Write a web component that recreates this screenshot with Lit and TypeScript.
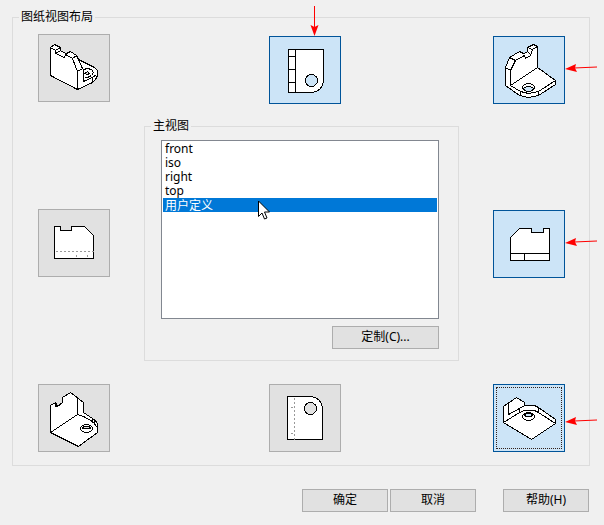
import { LitElement, html, css, svg, nothing } from "lit";
import type { TemplateResult } from "lit";
import { customElement, property } from "lit/decorators.js";

interface ViewInfo {
  label: string;
  drawing: TemplateResult;
}

const views: Record<string, ViewInfo> = {
  isoTopLeft: {
    label: "左上轴测图",
    drawing: svg`
      <path class="face" d="M11 12L15 9L21 12V15L26 18L31 16L37 20L39 24L55 32L58 35V40L56 44L53 47L38 54L11 40Z"/>
      <path d="M11 12L16 15V18L25 22L26 19L33 23L38 36V54M16 15L21 12M16 18L21 15M26 19L31 16M33 23L37 20L43 33L38 36"/>
      <path d="M44 34V46L53 42L57 39M53 42V47M44 34L48 33L52 34L54 37L52 40L48 42H45"/>
      <path class="hole" d="M45 38L48 36L50 38L48 39Z"/>`,
  },
  top: {
    label: "俯视图",
    drawing: svg`
      <path class="face" d="M18 12H53V43Q52 54 41 55H18Z"/>
      <path d="M25 12V55M18 19H25M18 32H25M18 45H25"/>
      <circle class="hole" cx="41" cy="43" r="6"/>`,
  },
  isoTopRight: {
    label: "右上轴测图",
    drawing: svg`
      <path class="face" d="M11 30L15 20L25 14L30 16L33 14V10L39 7L43 9V30L61 43V47L44 58L34 60L25 58L11 48Z"/>
      <path d="M11 30L16 33V48L43 30M16 33L21 23L15 20M21 23L30 18L31 21L36 18L38 12L43 9M25 14L30 17M33 10L38 12M33 14L36 17M16 48L26 54L34 56L44 54L61 43M26 54V58M44 54V58"/>
      <ellipse cx="34" cy="50" rx="6" ry="4"/>
      <path class="hole" d="M29 51L32 49H36L39 51L36 54H32Z"/>`,
  },
  left: {
    label: "左视图",
    drawing: svg`
      <path class="face" d="M15 16H21V20H32V16H45L54 25V48H15Z"/>
      <path class="hidden" d="M16 41H54M37 44V46M48 44V46"/>`,
  },
  right: {
    label: "右视图",
    drawing: svg`
      <path class="face" d="M16 26L25 17H37V21H49V17H55V49H16Z"/>
      <path d="M16 42H55M30 42V49"/>`,
  },
  isoBottomLeft: {
    label: "左下轴测图",
    drawing: svg`
      <path class="face" d="M11 20L16 17L18 21L23 17V12L31 7L44 17V27L53 33L57 36L58 39V47L39 61L11 47Z"/>
      <path d="M34 9L38 13V29L11 47M38 29L44 31L53 36L58 42M53 33V37L57 36M16 17V21L18 21"/>
      <ellipse cx="47" cy="43" rx="6" ry="4"/>
      <path class="hole" d="M43 42L45 41H49L51 42V43H43Z"/>`,
  },
  bottom: {
    label: "仰视图",
    drawing: svg`
      <path class="face" d="M17 11H41Q51 13 52 22V54H17Z"/>
      <path class="hidden" d="M24 12V54M20 22H22M20 48H22"/>
      <circle class="hole" cx="40" cy="23" r="6"/>`,
  },
  isoBottomRight: {
    label: "右下轴测图",
    drawing: svg`
      <path class="face" d="M9 21L22 12L30 17V20H40L44 22L61 34V38L37 54L9 37Z"/>
      <path d="M14 17V29L25 23L30 20M9 37L25 27L30 25H40L44 27L61 38M25 23V27M44 22V27"/>
      <ellipse cx="34" cy="31" rx="6" ry="4"/>
      <path class="hole" d="M30 29L32 28H36L38 29L37 31H31Z"/>`,
  },
};

@customElement("view-toggle")
class ViewToggle extends LitElement {
  @property() view = "top";
  @property({ type: Boolean }) on = false;
  @property({ type: Boolean }) current = false;
  @property() arrow = "";

  static styles = css`
    :host {
      display: block;
      position: relative;
      flex: none;
    }
    .toggle {
      display: block;
      box-sizing: border-box;
      width: 72px;
      height: 68px;
      padding: 0;
      border: 1px solid #adadad;
      border-radius: 0;
      background: #e1e1e1;
      --surface: #e1e1e1;
    }
    .toggle.on {
      border-color: #005499;
      background: #cce4f7;
      --surface: #cce4f7;
    }
    .toggle.current {
      outline: 1px dotted #33201a;
      outline-offset: -4px;
    }
    .drawing {
      display: block;
      width: 70px;
      height: 66px;
      fill: none;
      stroke: #000;
      stroke-width: 1;
      shape-rendering: crispEdges;
    }
    .face {
      fill: #fff;
    }
    .hole {
      fill: var(--surface);
    }
    .hidden {
      stroke: #999;
      stroke-dasharray: 2 2;
    }
    .arrow {
      position: absolute;
      fill: #f00;
      stroke: #f00;
      stroke-width: 1;
    }
    .arrow.down {
      left: 40px;
      bottom: 100%;
      width: 11px;
      height: 31px;
    }
    .arrow.side {
      left: 100%;
      top: 26px;
      width: 34px;
      height: 12px;
    }
    .arrow.low {
      top: 31px;
    }
  `;

  private renderArrow() {
    if (this.arrow === "down") {
      return html`<svg class="arrow down" viewBox="0 0 11 31" aria-hidden="true">
        <path d="M5.5 1V22" /><path stroke="none" d="M5.500 31L1.500 20L5.500 22L9.500 20Z" />
      </svg>`;
    }
    if (this.arrow) {
      return html`<svg class="arrow side ${this.arrow}" viewBox="0 0 34 12" aria-hidden="true">
        <path d="M32 5L9 6" /><path stroke="none" d="M0 7L11 2L10 6L12 10Z" />
      </svg>`;
    }
    return nothing;
  }

  render() {
    const info = views[this.view];
    return html`
      <button
        type="button"
        class="toggle ${this.on ? "on" : ""} ${this.current ? "current" : ""}"
        aria-label=${info.label}
        aria-pressed=${this.on ? "true" : "false"}
      >
        <svg class="drawing" viewBox="0 0 70 66" aria-hidden="true">
          <g transform="translate(.5 .5)">${info.drawing}</g>
        </svg>
      </button>
      ${this.renderArrow()}
    `;
  }
}

@customElement("app-root")
class AppRoot extends LitElement {
  static styles = css`
    :host {
      display: block;
      box-sizing: border-box;
      min-height: 100vh;
      padding: 9px 14px 13px 12px;
      background: #f0f0f0;
      color: #000;
      font: 12px/16px "Noto Sans", "Noto Sans CJK SC", sans-serif;
    }
    .group {
      min-width: 0;
      margin: 0;
      border: 1px solid #dcdcdc;
    }
    .title {
      padding: 0 2px;
    }
    .layout {
      padding: 9px 24px 13px 6px;
    }
    .columns {
      display: grid;
      grid-template-columns: 72px 1fr 72px;
      padding-left: 19px;
    }
    .side,
    .middle {
      display: flex;
      flex-direction: column;
      justify-content: space-between;
    }
    .lowered {
      padding-top: 2px;
    }
    .middle {
      align-items: center;
      padding: 2px 27px 0 34px;
    }
    .main-view {
      align-self: stretch;
      margin: 14px 7px 23px 0;
      padding: 6px 19px 11px 6px;
    }
    .main-body {
      display: flex;
      flex-direction: column;
      gap: 7px;
      padding-left: 10px;
    }
    .list-area {
      position: relative;
    }
    .list {
      display: block;
      box-sizing: border-box;
      width: 100%;
      height: 179px;
      padding: 1px;
      border: 1px solid #828790;
      border-radius: 0;
      background: #fff;
      color: #000;
      font: inherit;
      outline: none;
      overflow: hidden;
    }
    .item {
      display: flex;
      align-items: center;
      box-sizing: border-box;
      height: 14px;
      min-height: 14px;
      padding: 0 2px 1px;
    }
    .item:checked {
      background: linear-gradient(#0078d7, #0078d7);
      -webkit-text-fill-color: #fff;
    }
    .pointer {
      position: absolute;
      left: 97px;
      top: 60px;
      width: 13px;
      height: 20px;
      fill: #fff;
      stroke: #000;
    }
    .push {
      box-sizing: border-box;
      width: 86px;
      height: 23px;
      padding: 0 0 2px;
      border: 1px solid #adadad;
      border-radius: 0;
      background: #e1e1e1;
      color: #000;
      font: inherit;
    }
    .push.wide {
      align-self: flex-end;
      width: 107px;
    }
    .actions {
      display: flex;
      justify-content: flex-end;
      gap: 2px;
      margin-top: 23px;
      padding-right: 1px;
    }
    .help {
      margin-left: 25px;
    }
  `;

  render() {
    return html`
      <fieldset class="group layout">
        <legend class="title">图纸视图布局</legend>
        <div class="columns">
          <div class="side">
            <view-toggle view="isoTopLeft"></view-toggle>
            <view-toggle view="left"></view-toggle>
            <view-toggle view="isoBottomLeft"></view-toggle>
          </div>
          <div class="middle">
            <view-toggle view="top" on arrow="down"></view-toggle>
            <fieldset class="group main-view">
              <legend class="title">主视图</legend>
              <div class="main-body">
                <div class="list-area">
                  <select class="list" size="12" aria-label="主视图">
                    <option class="item">front</option>
                    <option class="item">iso</option>
                    <option class="item">right</option>
                    <option class="item">top</option>
                    <option class="item" selected>用户定义</option>
                  </select>
                  <svg class="pointer" viewBox="0 0 13 20" aria-hidden="true">
                    <path d="M.5 1V16.5L4 13L6.500 19L9 18L6.500 12H11.500Z" />
                  </svg>
                </div>
                <button type="button" class="push wide">定制(C)...</button>
              </div>
            </fieldset>
            <view-toggle view="bottom"></view-toggle>
          </div>
          <div class="side lowered">
            <view-toggle view="isoTopRight" on arrow="side"></view-toggle>
            <view-toggle view="right" on arrow="side"></view-toggle>
            <view-toggle view="isoBottomRight" on current arrow="low"></view-toggle>
          </div>
        </div>
      </fieldset>
      <div class="actions">
        <button type="button" class="push">确定</button>
        <button type="button" class="push">取消</button>
        <button type="button" class="push help">帮助(H)</button>
      </div>
    `;
  }
}
